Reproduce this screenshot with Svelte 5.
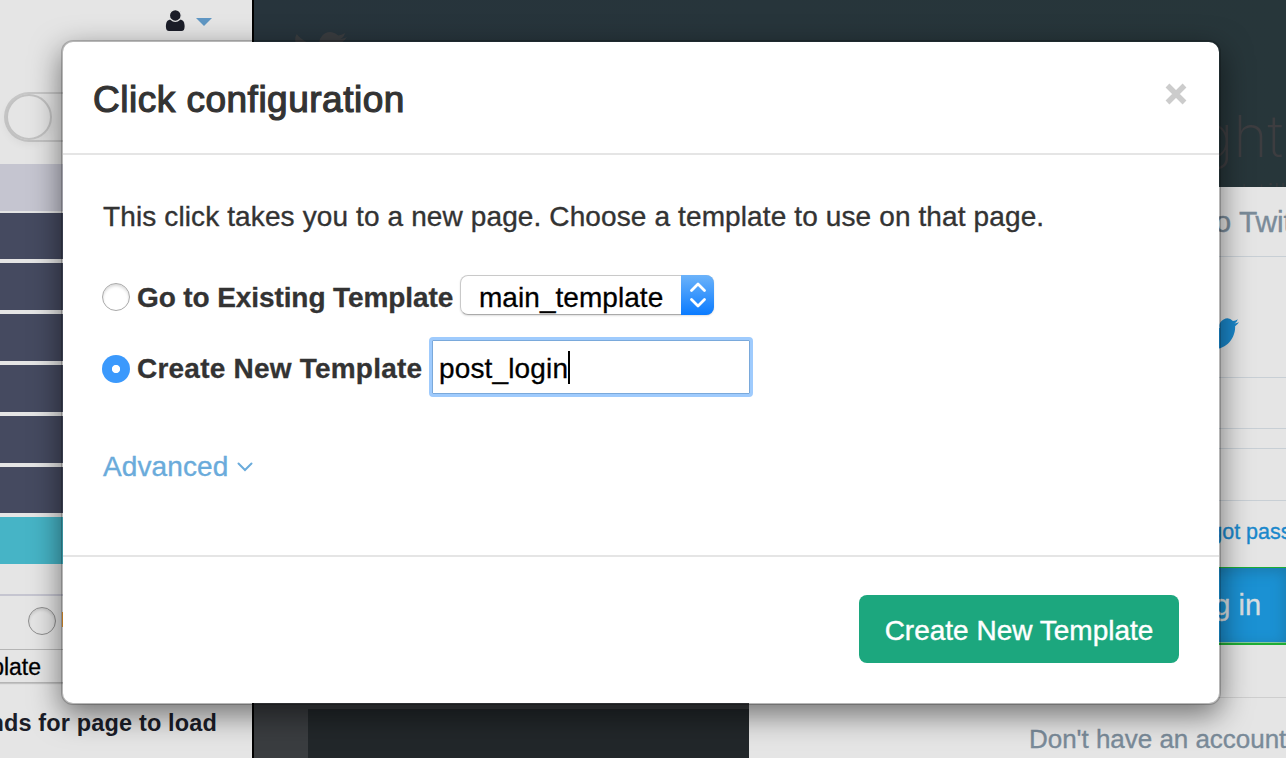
<script>
  let mode = $state('new');
  let name = $state('post_login');
  const steps = [47, 46, 47, 47, 47, 47, 46, 47];
</script>

{#snippet bird(cls)}
  <svg class={cls} viewBox="0 0 24 24" aria-hidden="true">
    <path d="M23.95 4.57a10 10 0 0 1-2.82.77 4.96 4.96 0 0 0 2.16-2.72c-.95.55-2 .96-3.13 1.18a4.92 4.92 0 0 0-8.38 4.48C7.69 8.1 4.07 6.13 1.64 3.16a4.93 4.93 0 0 0 1.52 6.57 4.9 4.9 0 0 1-2.23-.61v.06a4.92 4.92 0 0 0 3.95 4.83 5 5 0 0 1-2.21.08 4.94 4.94 0 0 0 4.6 3.42A9.87 9.87 0 0 1 0 19.54a13.99 13.99 0 0 0 7.55 2.21c9.05 0 14-7.5 14-13.98 0-.21 0-.42-.02-.63a9.94 9.94 0 0 0 2.46-2.55z" />
  </svg>
{/snippet}

<div class="screen">
  <div class="app">
    <aside>
      <div class="user">
        <svg width="20" height="22" viewBox="0 0 20 22"><path d="M5.500 9.500C2.200 9.800 0.900 12.500 0.900 16.500C0.900 19.500 2 21 4 21h12.500c2 0 3.100-1.500 3.100-4.500C19.600 12.500 18.300 9.800 15 9.500z" /><circle cx="10.300" cy="5.400" r="5.900" stroke="#e5e5e5" stroke-width="1.300" /></svg>
        <i class="caret"></i>
      </div>
      <div class="switch"><i></i></div>
      <div class="steps">
        {#each steps as h, i}
          <div class="step" class:first={i === 0} class:last={i === 7} style="height:{h}px"></div>
        {/each}
      </div>
      <div class="option"><i class="ring"></i><b></b></div>
      <div class="side-select"><span>main_template</span></div>
      <div class="wait"><span>Seconds for page to load</span></div>
    </aside>

    <main>
      <header>
        {@render bird('logo')}
        <div class="slogan">Insight</div>
        <div class="sub">and the latest till</div>
      </header>
      <section>
        <div class="photo"><div></div></div>
        <div class="login">
          <div class="heading"><span>Log in to Twitter</span></div>
          <div class="brand">{@render bird('bird')}</div>
          <div class="field"></div>
          <div class="gap"></div>
          <div class="field two"></div>
          <div class="forgot">Forgot password?</div>
          <div class="login-btn"><span>Log in</span></div>
          <div class="space"></div>
          <div class="signup"><span>Don't have an account?</span></div>
        </div>
      </section>
    </main>
  </div>

  <div class="modal" role="dialog" aria-label="Click configuration">
    <div class="head">
      <h1>Click configuration</h1>
      <svg class="close" width="22" height="22" viewBox="0 0 22 22"><path d="M2.500 2.500L19.500 19.500M19.500 2.500L2.500 19.500" /></svg>
    </div>
    <div class="body">
      <p>This click takes you to a new page. Choose a template to use on that page.</p>
      <div class="row existing">
        <button class="radio" class:on={mode === 'old'} aria-label="Existing" onclick={() => (mode = 'old')}></button>
        <strong>Go to Existing Template</strong>
        <div class="select">
          <span>main_template</span>
          <i><svg width="33" height="40" viewBox="0 0 33 40"><path d="M10.500 15.500l6.500-6.500 6.500 6.500M10.500 24.500l6.500 6.500 6.500-6.500" /></svg></i>
        </div>
      </div>
      <div class="row create">
        <button class="radio" class:on={mode === 'new'} aria-label="New" onclick={() => (mode = 'new')}></button>
        <strong>Create New Template</strong>
        <div class="input"><span>{name}</span><i></i></div>
      </div>
      <div class="advanced"><span>Advanced</span><svg width="16" height="12" viewBox="0 0 16 12"><path d="M1.500 2.500l6.500 6.500 6.500-6.500" /></svg></div>
    </div>
    <div class="foot"><button class="primary"><span>Create New Template</span></button></div>
  </div>
</div>

<style>
  :global(body) { margin: 0; overflow: hidden; }
  * { box-sizing: border-box; }
  .screen { position: relative; width: 1286px; height: 758px; overflow: hidden; font-family: "Liberation Sans", Arial, sans-serif; }
  .screen span, p, h1, strong { white-space: nowrap; }
  .app { display: flex; height: 758px; }
  aside { width: 254px; flex: none; background: #e5e5e5; border-right: 2px solid #000; display: flex; flex-direction: column; overflow: hidden; }
  .user { height: 92px; flex: none; padding: 10px 0 0 165px; display: flex; align-items: flex-start; gap: 11px; fill: #1b1d28; }
  .user svg { overflow: visible; }
  .caret { margin-top: 8px; border: 8px solid transparent; border-top-color: #6097c4; border-bottom: 0; }
  .switch { width: 110px; height: 50px; margin-left: 4px; flex: none; border: 2px solid #c8c8c8; border-left-width: 3px; border-radius: 25px; }
  .switch i { display: block; width: 46px; height: 46px; margin-left: -1px; border: 2px solid #c2c2c2; border-radius: 50%; box-shadow: 0 4px 10px rgba(0,0,0,.06); }
  .steps { margin-top: 22px; flex: none; display: flex; flex-direction: column; gap: 4px; }
  .step { background: #454a60; flex: none; }
  .first { background: #c5c5d0; margin-bottom: -2px; }
  .last { background: #46b4c6; }
  .option { height: 55px; flex: none; margin-top: 30px; border-top: 2px solid #c5c5d0; display: flex; padding: 11px 0 0 28px; gap: 6px; }
  .ring { width: 28px; height: 28px; border: 1.500px solid #8e8e8e; border-radius: 50%; box-shadow: inset 0 2px 3px rgba(0,0,0,.12); }
  .option b { width: 4px; height: 15px; margin-top: 5px; background: #e0912b; }
  .side-select { height: 34px; flex: none; border: solid #b5b5b5; border-width: 1px 0; box-shadow: 0 1px 1px rgba(0,0,0,.15); width: 150px; }
  .side-select span { width: 41px; display: flex; justify-content: flex-end; font-size: 23px; line-height: 34px; color: #000; -webkit-text-stroke: .3px #000; }
  .wait { width: 217px; display: flex; justify-content: flex-end; padding-top: 24px; font-size: 23.500px; line-height: 32px; font-weight: 700; color: #1b1d28; letter-spacing: .15px; }
  main { flex: 1; min-width: 0; }
  header { position: relative; height: 187px; background: linear-gradient(90deg, #27343c, #27363a); overflow: hidden; color: #373a3d; }
  header :global(.logo) { display: block; width: 54px; height: 54px; margin: 27px 0 0 39px; fill: #3a3d40; }
  .slogan { position: absolute; right: 3px; top: 100px; font: 200 58px/72px Inter, sans-serif; color: #3d3d40; }
  .sub { position: absolute; right: 0; top: 177px; font: 300 28px/30px Lato, sans-serif; }
  section { display: grid; grid-template-columns: 495px 537px; height: 571px; }
  .photo { background: #3a3d40; padding-left: 54px; padding-top: 522px; }
  .photo div { height: 49px; background: #22272a; }
  .login { background: #e5e5e5; overflow: hidden; -webkit-text-stroke: .35px currentColor; }
  .heading { height: 70px; border-bottom: 1px solid #c8cfd5; padding: 18px 0 0 368px; font-size: 30px; line-height: 34px; letter-spacing: -.1px; color: #7a8b99; }
  .brand { height: 121px; border-bottom: 1px solid #c8cfd5; padding: 58px 0 0 452px; }
  .brand :global(.bird) { width: 38px; height: 38px; fill: #1a88cc; display: block; }
  .field { height: 51px; border-bottom: 1px solid #c8cfd5; }
  .gap { height: 20px; border-bottom: 1px solid #c8cfd5; }
  .two { height: 52px; }
  .forgot { height: 66px; padding: 17px 0 0 429px; font-size: 21.500px; line-height: 28px; color: #1a88cc; white-space: nowrap; }
  .login-btn { height: 78px; border: solid #1ead34; border-width: 1px 0 2px; background: #1b91d3; box-shadow: inset 0 3px 14px rgba(27,95,130,.5), inset 0 -1px 0 #9adca6; padding: 19px 0 0 433px; font-size: 29px; line-height: 36px; color: #d8dfe2; }
  .space { height: 53px; border-bottom: 1px solid #cecece; }
  .signup { padding: 24px 0 0 280px; font-size: 26px; line-height: 34px; color: #7a8b99; letter-spacing: -.03px; }

  .modal { position: absolute; left: 61px; top: 40px; width: 1160px; height: 665px; border: 2px solid rgba(0,0,0,.2); border-radius: 12px; background: #fff padding-box; box-shadow: 0 10px 30px rgba(0,0,0,.5); color: #333; display: flex; flex-direction: column; }
  .head { height: 113px; flex: none; border-bottom: 2px solid #e5e5e5; display: flex; justify-content: space-between; padding: 36px 32px 0 30px; }
  h1 { margin: 0; font-size: 37px; line-height: 44px; font-weight: 400; letter-spacing: .5px; -webkit-text-stroke: 1.200px #333; }
  .close { margin-top: 5px; stroke: #ccc; stroke-width: 5.400; }
  .body { height: 402px; flex: none; border-bottom: 2px solid #e5e5e5; padding: 44px 39px; font-size: 28px; }
  p { margin: 0 0 0 1px; font-size: 28px; line-height: 36px; letter-spacing: .12px; -webkit-text-stroke: .35px #333; }
  .row { display: flex; align-items: center; }
  .existing { height: 40px; margin-top: 40px; }
  .create { height: 60px; margin-top: 22px; }
  .radio { width: 28px; height: 28px; flex: none; padding: 0; margin: 3px 7px 0 0; border: 1.500px solid #aaa; border-radius: 50%; background: #fff; box-shadow: inset 0 2px 3px rgba(0,0,0,.15); }
  .radio.on { border: 0; background: radial-gradient(circle, #fff 3.700px, #3b99fc 4.500px); box-shadow: none; }
  strong { font-size: 28px; line-height: 36px; -webkit-text-stroke: .3px #333; }
  .existing strong { width: 323px; margin-top: 5px; letter-spacing: -.1px; }
  .create strong { width: 292px; margin-top: 3px; letter-spacing: .22px; }
  .select { width: 254px; height: 40px; border: 1px solid #c9c9c9; border-bottom-color: #aaa; border-radius: 8px; display: flex; color: #000; box-shadow: 0 1px 2px rgba(0,0,0,.13); }
  .select span { flex: 1; padding: 4px 0 0 18px; font-size: 28px; line-height: 36px; letter-spacing: .05px; -webkit-text-stroke: .3px #000; }
  .select i { flex: none; width: 33px; height: 40px; margin: -1px -1px 0 0; border-radius: 0 8px 8px 0; background: linear-gradient(#6cb3fa, #0a7bff); }
  .select svg { display: block; fill: none; stroke: #fff; stroke-width: 2.800; stroke-linecap: round; stroke-linejoin: round; }
  .input { width: 324px; height: 60px; border: 3px solid #9fcbfd; border-radius: 4px; box-shadow: inset 0 0 0 1px #7aa9db; padding-left: 7px; display: flex; align-items: center; color: #000; font-size: 28px; letter-spacing: .15px; -webkit-text-stroke: .3px #000; }
  .input span { margin-top: 3px; }
  .input i { width: 2px; height: 33px; background: #000; }
  .advanced { display: flex; align-items: center; margin: 52px 0 0 1px; gap: 9px; font-size: 28px; line-height: 36px; letter-spacing: .1px; color: #6aabdb; -webkit-text-stroke: .35px #6aabdb; }
  .advanced svg { fill: none; stroke: #6aabdb; stroke-width: 2; stroke-linecap: round; }
  .foot { flex: 1; display: flex; justify-content: flex-end; padding: 38px 40px 0 0; }
  .primary { width: 320px; height: 68px; border: 0; border-radius: 8px; background: #1ca77e; color: #fff; font: 28px/36px "Liberation Sans", Arial, sans-serif; padding: 4px 0 0; -webkit-text-stroke: .4px #fff; }
</style>
